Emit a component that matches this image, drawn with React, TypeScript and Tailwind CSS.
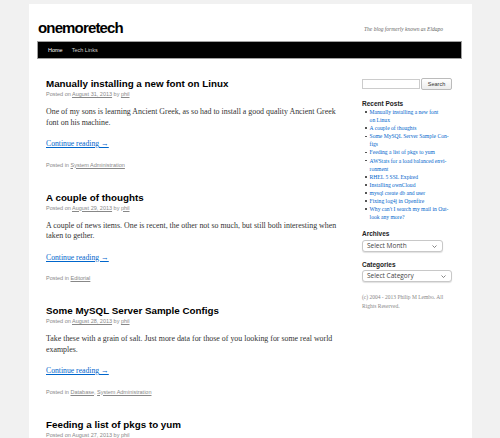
const posts = [
  {
    title: "Manually installing a new font on Linux",
    date: "August 31, 2013",
    excerpt:
      "One of my sons is learning Ancient Greek, as so had to install a good quality Ancient Greek font on his machine.",
    cats: ["System Administration"],
  },
  {
    title: "A couple of thoughts",
    date: "August 29, 2013",
    excerpt:
      "A couple of news items. One is recent, the other not so much, but still both interesting when taken to gether.",
    cats: ["Editorial"],
  },
  {
    title: "Some MySQL Server Sample Configs",
    date: "August 28, 2013",
    excerpt:
      "Take these with a grain of salt. Just more data for those of you looking for some real world examples.",
    cats: ["Database", "System Administration"],
  },
  {
    title: "Feeding a list of pkgs to yum",
    date: "August 27, 2013",
    excerpt: "",
    cats: [],
  },
]

// each entry is the lines as they wrap in the sidebar
const recent = [
  ["Manually installing a new font", "on Linux"],
  ["A couple of thoughts"],
  ["Some MySQL Server Sample Con-", "figs"],
  ["Feeding a list of pkgs to yum"],
  ["AWStats for a load balanced envi-", "ronment"],
  ["RHEL 5 SSL Expired"],
  ["Installing ownCloud"],
  ["mysql create db and user"],
  ["Fixing log4j in Openfire"],
  ["Why can't I search my mail in Out-", "look any more?"],
]

const sans = "font-['Liberation_Sans',Arial,sans-serif]"
const serif = "font-['Liberation_Serif','Times_New_Roman',serif]"

function FakeSelect({ label, width }: { label: string; width: string }) {
  return (
    <div
      className={`${width} h-[12px] flex items-center justify-between rounded-[3px] border border-[#c8c8c8] bg-white pl-[4px] pr-[5px] shadow-[0_1px_1px_rgba(0,0,0,0.12)]`}
    >
      <span className="font-['Open_Sans',sans-serif] text-[6.5px] leading-none text-[#444]">{label}</span>
      <svg width="5" height="3" viewBox="0 0 5 3" className="text-[#666]">
        <path d="M0.5 0.5 L2.5 2.5 L4.5 0.5" fill="none" stroke="currentColor" strokeWidth="0.8" />
      </svg>
    </div>
  )
}

export default function App() {
  return (
    <div className="min-h-screen bg-[#f1f1f1] pt-[4px]">
      <div className="ml-[29px] w-[443px] min-h-[434px] bg-white pl-[8px] pr-[10px]">
        {/* header */}
        <div className="flex h-[37px] items-end justify-between">
          <h1 className={`${sans} pl-[1px] pb-[4px] text-[15px] font-bold leading-[18px] tracking-[-0.85px] text-black`}>
            onemoretech
          </h1>
          <div className={`${serif} pb-[9px] pr-[19px] text-[5.5px] italic leading-none text-[#666]`}>
            The blog formerly known as Eldapo
          </div>
        </div>

        {/* menu */}
        <div className={`${sans} flex h-[18px] items-center gap-[9px] border border-[#a0a0a0] bg-black pl-[10px] text-[5.5px]`}>
          <span className="text-white">Home</span>
          <span className="text-[#cfcfcf]">Tech Links</span>
        </div>

        <div className="flex">
          {/* posts */}
          <div className="w-[317px] shrink-0 pl-[9px] pt-[19px]">
            {posts.map((p, i) => (
              <div key={i} className="mb-[23px] w-[296px]">
                <h2 className={`${sans} text-[9.8px] font-bold leading-[12px] text-black`}>{p.title}</h2>
                <div className={`${sans} text-[5.5px] leading-[8px] text-[#888]`}>
                  Posted on <span className="underline">{p.date}</span> by <span className="underline">phil</span>
                </div>
                {p.excerpt && (
                  <>
                    <p className={`${serif} mt-[9px] text-[7.9px] leading-[10.5px] text-[#333]`}>{p.excerpt}</p>
                    <div className={`${serif} mt-[11px] text-[7.7px] leading-[10.5px] text-[#0066cc] underline`}>
                      Continue reading →
                    </div>
                    <div className={`${sans} mt-[11px] text-[5.5px] leading-[8px] text-[#888]`}>
                      Posted in{" "}
                      {p.cats.map((c, j) => (
                        <span key={c}>
                          <span className="underline">{c}</span>
                          {j < p.cats.length - 1 ? ", " : ""}
                        </span>
                      ))}
                    </div>
                  </>
                )}
              </div>
            ))}
          </div>

          {/* sidebar */}
          <div className="w-[100px] pl-[8px] pt-[19px]">
            <div className="flex items-center gap-[1px]">
              <div className="h-[10px] w-[58px] border border-[#ccc] bg-white" />
              <div className={`${sans} flex h-[12px] w-[31px] items-center justify-center rounded-[2px] border border-[#bbb] bg-gradient-to-b from-white to-[#ececec] text-[5.5px] text-[#333]`}>
                Search
              </div>
            </div>

            <div className={`${sans} mt-[10px] text-[6.5px] font-bold leading-[8px] text-[#222]`}>Recent Posts</div>
            <ul>
              {recent.map((lines, i) => (
                <li key={i} className="flex">
                  <span className="mt-[3.3px] ml-[3px] mr-[3px] h-[1.6px] w-[1.6px] shrink-0 bg-[#555]" />
                  <span className={`${serif} text-[5.6px] leading-[8.1px] text-[#0066cc]`}>
                    {lines.map((l, j) => (
                      <span key={j} className="block">
                        {l}
                      </span>
                    ))}
                  </span>
                </li>
              ))}
            </ul>

            <div className={`${sans} mt-[9px] text-[6.5px] font-bold leading-[8px] text-[#222]`}>Archives</div>
            <div className="mt-[2px]">
              <FakeSelect label="Select Month" width="w-[81px]" />
            </div>

            <div className={`${sans} mt-[9px] text-[6.5px] font-bold leading-[8px] text-[#222]`}>Categories</div>
            <div className="mt-[1px]">
              <FakeSelect label="Select Category" width="w-[90px]" />
            </div>

            <p className={`${serif} mt-[11px] w-[90px] text-[5.5px] leading-[8.3px] text-[#888]`}>
              (c) 2004 - 2013 Philip M Lembo. All Rights Reserved.
            </p>
          </div>
        </div>
      </div>
    </div>
  )
}
